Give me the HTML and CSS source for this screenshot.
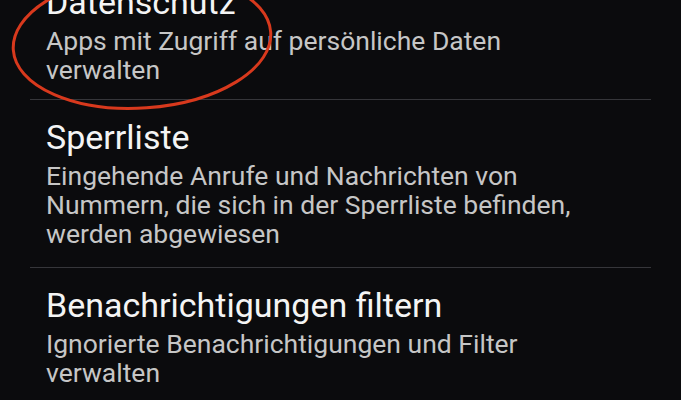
FILE: index.html
```html
<!DOCTYPE html>
<html lang="de">
<head>
<meta charset="utf-8">
<title>Einstellungen</title>
<link rel="stylesheet" href="styles.css">
</head>
<body>
<div class="screen">
  <ul class="list">
    <li class="item item-first">
      <div class="title">Datenschutz</div>
      <div class="summary">Apps mit Zugriff auf persönliche Daten verwalten</div>
    </li>
    <li class="item">
      <div class="title">Sperrliste</div>
      <div class="summary">Eingehende Anrufe und Nachrichten von Nummern, die sich in der Sperrliste befinden, werden abgewiesen</div>
    </li>
    <li class="item item-last">
      <div class="title">Benachrichtigungen filtern</div>
      <div class="summary">Ignorierte Benachrichtigungen und Filter verwalten</div>
    </li>
  </ul>
  <svg class="mark" width="300" height="130" viewBox="0 0 300 130" aria-hidden="true">
    <ellipse cx="142" cy="41" rx="129" ry="67" transform="rotate(-4 142 41)" fill="none" stroke="#d8391d" stroke-width="3"/>
  </svg>
</div>
</body>
</html>
```
FILE: styles.css
```css
html, body {
  margin: 0;
  padding: 0;
  background: #0b0b0d;
}
body {
  width: 681px;
  height: 400px;
  overflow: hidden;
  font-family: Roboto, "Noto Sans", sans-serif;
}
.screen {
  position: relative;
  width: 681px;
  height: 400px;
  overflow: hidden;
}
.list {
  list-style: none;
  margin: -35px 30px 0 30px;
  padding: 0;
}
.item {
  padding: 17px 0 19px 16px;
  border-bottom: 1px solid #36363a;
}
.item-first {
  padding-bottom: 15px;
}
.item-last {
  border-bottom: none;
}
.title {
  font-size: 34px;
  line-height: 40px;
  color: #f4f4f4;
}
.summary {
  margin-top: 4px;
  font-size: 26.5px;
  line-height: 29px;
  color: #c6c6c6;
  width: 545px;
}
.mark {
  position: absolute;
  left: 0;
  top: 0;
  pointer-events: none;
}
```
